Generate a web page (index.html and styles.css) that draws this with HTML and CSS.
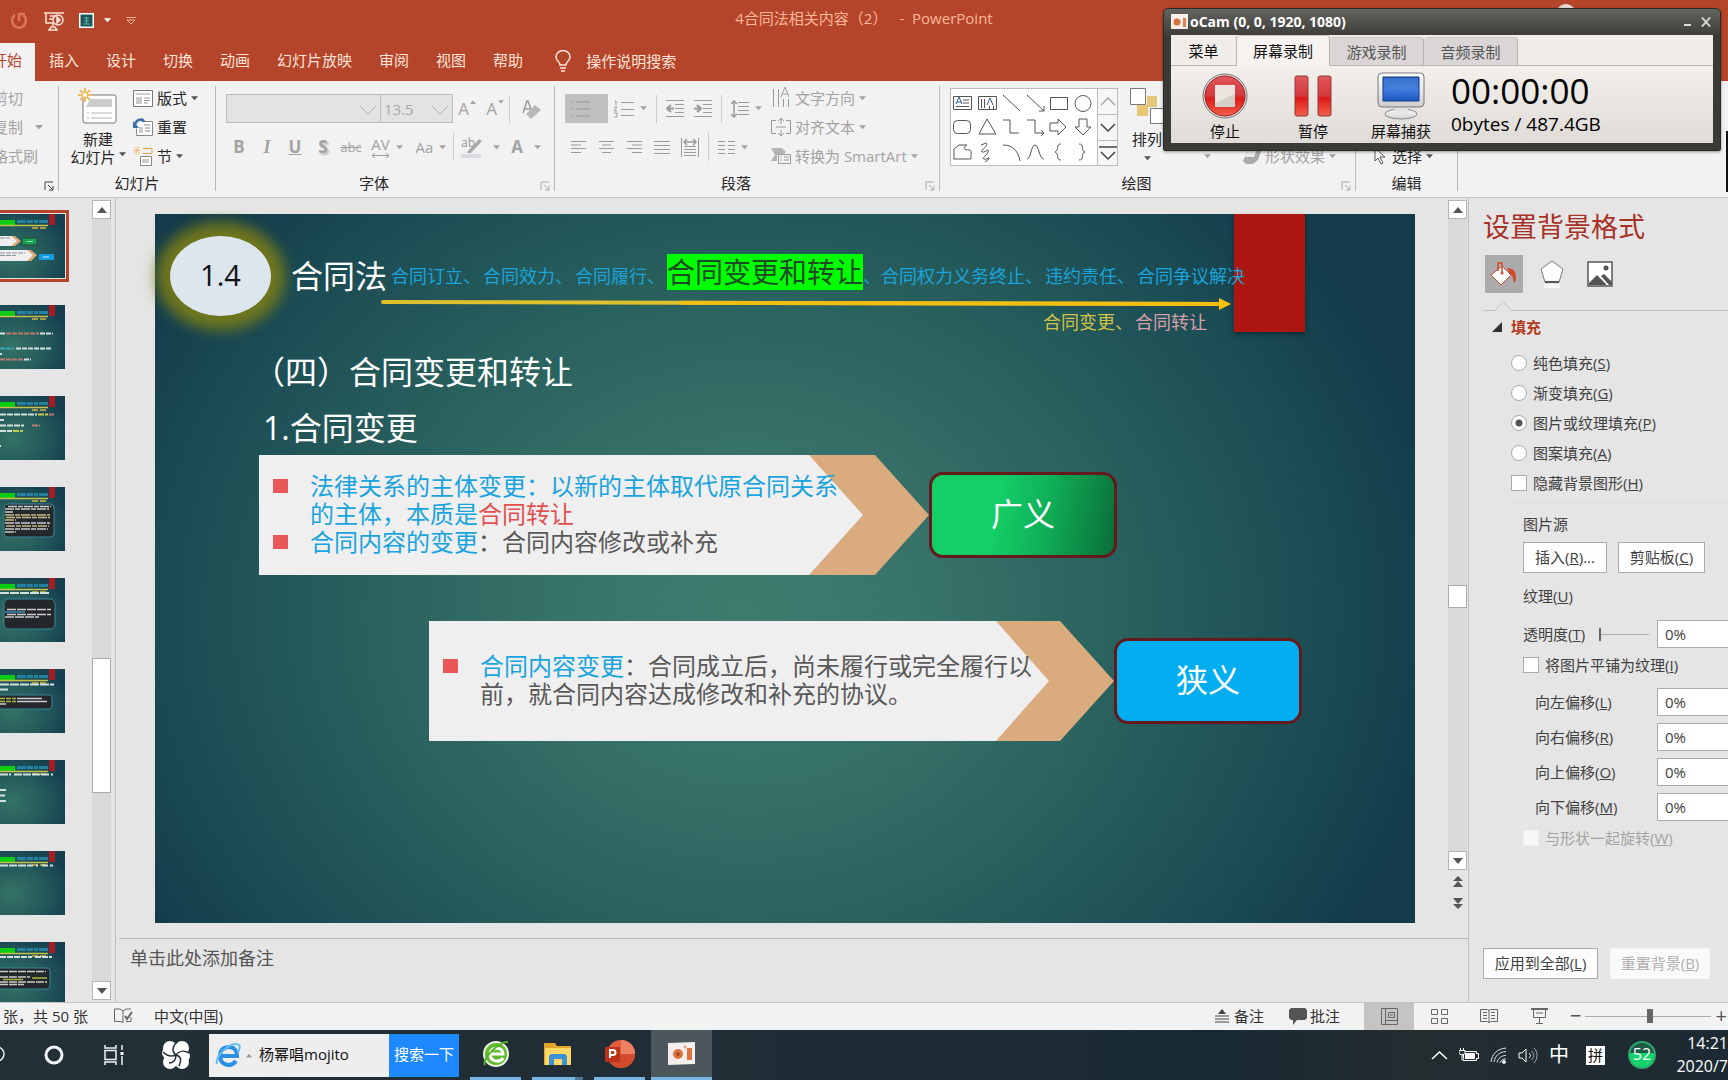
FILE: index.html
```html
<!DOCTYPE html>
<html lang="zh-CN">
<head>
<meta charset="utf-8">
<title>4合同法相关内容（2） - PowerPoint</title>
<link rel="stylesheet" href="styles.css">
</head>
<body>
<svg class="defs" aria-hidden="true">
  <defs>
    <symbol id="down" viewBox="0 0 8 5"><path d="M0 0h8L4 4.500z"/></symbol>
    <symbol id="launch" viewBox="0 0 10 10"><path d="M1 9V1h8M4 4l5 5M9 5v4H5" fill="none" stroke="currentColor"/></symbol>
    <symbol id="thumb-head" viewBox="0 0 65 64">
      <path d="M0 6h15v5H0z" fill="#0ccc14"/>
      <path d="M17 7.500h33" stroke="#23829f" stroke-width="3" stroke-dasharray="9 1 6 1 4 1"/>
      <path d="M0 11.500h48" stroke="#c6bf4a" stroke-width="1.500"/>
      <path d="M32 14h15" stroke="#a49a4a" stroke-width="2" stroke-dasharray="6 2"/>
      <path d="M49 0h6v11h-6z" fill="#a51c22"/>
    </symbol>
    <linearGradient id="g-red" x2="0" y2="1"><stop offset="0" stop-color="#e0585a"/><stop offset=".5" stop-color="#d5383c"/><stop offset=".55" stop-color="#dd1a16"/><stop offset="1" stop-color="#f2604c"/></linearGradient>
    <linearGradient id="g-blue" x2="0" y2="1"><stop offset="0" stop-color="#1a4fae"/><stop offset=".5" stop-color="#3f7fe0"/><stop offset="1" stop-color="#1d55c0"/></linearGradient>
    <linearGradient id="g-silver" x2="0" y2="1"><stop offset="0" stop-color="#fff"/><stop offset="1" stop-color="#cfcfcf"/></linearGradient>
  </defs>
</svg>

<div class="app">
  <header class="titlebar">
    <div class="quick">
      <button aria-label="重做"><svg width="20" height="20" viewBox="0 0 20 20" fill="none" stroke="#d9775c" stroke-width="2.500"><path d="M6 4a7 7 0 1 0 8 0"/><path d="M10 10V3h6"/></svg></button>
      <button aria-label="从头开始"><svg width="20" height="20" viewBox="0 0 20 20" fill="none" stroke="#fbe3d8" stroke-width="1.500"><path d="M0 2h20M2 2v10h7M6 5h7M5 8h4M9 12v3M5 19l2-3h4l2 3z"/><circle cx="14" cy="9" r="5"/><path d="M13 6l3 3-3 3z" fill="#fbe3d8"/></svg></button>
      <button aria-label="主题"><svg width="15" height="15" viewBox="0 0 15 15"><path d="M.75.75h13.500v13.500H.75z" fill="#1d5458" stroke="#fff" stroke-width="1.500"/><path d="M5 5h5M5 8h5M4 11h7M7.500 4v7" stroke="#58b3a6"/></svg></button>
      <button class="tiny" aria-label="更多主题"><svg width="7" height="5" fill="#fff"><use href="#down"/></svg></button>
      <button aria-label="自定义快速访问工具栏"><svg width="10" height="8" viewBox="0 0 10 8" fill="none" stroke="#f3b59e"><path d="M0 .5h10M1 3h8L5 7z"/></svg></button>
    </div>
    <h1>4合同法相关内容（2）<span>-&nbsp; PowerPoint</span></h1>
    <i class="avatar"></i>
  </header>

  <nav class="tabs">
    <a href="#" class="current">开始</a>
    <a href="#">插入</a><a href="#">设计</a><a href="#">切换</a><a href="#">动画</a><a href="#">幻灯片放映</a><a href="#">审阅</a><a href="#">视图</a><a href="#">帮助</a>
    <a href="#" class="tell"><svg width="16" height="22" viewBox="0 0 16 22" fill="none" stroke="#fbe3d8" stroke-width="1.500"><path d="M5 15c0-3-4-4-4-8a7 6.500 0 0 1 14 0c0 4-4 5-4 8zM5 18h6M6 21h4"/></svg>操作说明搜索</a>
  </nav>

  <section class="ribbon">
    <div class="group clipboard">
      <div class="stack">
        <button class="off">剪切</button>
        <button class="off">复制<svg class="far" width="8" height="5"><use href="#down"/></svg></button>
        <button class="off">格式刷</button>
      </div>
      <div class="caption"><svg class="launcher" width="10" height="10"><use href="#launch"/></svg></div>
    </div>

    <div class="group slides">
      <div class="body">
        <button class="big"><svg width="40" height="36" viewBox="0 0 40 36"><rect x="5" y="7" width="33" height="28" rx="2" fill="#fff" stroke="#777"/><path d="M12 11h22v8H8" fill="#ccc"/><path d="M9 25h2M13 25h21M9 30h2M13 30h21" stroke="#b5b5b5"/><path d="M7 0v14M0 7h14M2 2l10 10M12 2L2 12" stroke="#eebb62" stroke-width="2"/><circle cx="7" cy="7" r="2" fill="#fff"/></svg><span>新建</span><span>幻灯片<svg width="7" height="5"><use href="#down"/></svg></span></button>
        <div class="stack">
          <button><svg class="ic" width="20" height="17" viewBox="0 0 20 17" fill="none" stroke="#777"><path d="M.5.5h19v16H.5z" fill="#fff"/><path d="M3 3h14v2H3zM3 7h6v7H3z" fill="#ccc" stroke="none"/><path d="M11 8h6M11 10.500h6M11 13h4" stroke="#999"/></svg>版式<svg width="7" height="5"><use href="#down"/></svg></button>
          <button><svg class="ic" width="20" height="18" viewBox="0 0 20 18" fill="none" stroke="#888"><path d="M8.500 3.500h11v14h-16v-7" fill="#fff"/><path d="M11 7h6M12 10h5M12 13h5"/><path d="M6 9h4v6H6z" fill="#ccc" stroke="none"/><path d="M2 7c1-6 8-7 9-3" stroke="#3a6fa8" stroke-width="2.500"/><path d="M0 3v7h6z" fill="#3a6fa8" stroke="none"/></svg>重置</button>
          <button><svg class="ic" width="20" height="20" viewBox="0 0 20 20" fill="none" stroke="#888"><path d="M10 2.500h9v5h-9" stroke="#e0a050"/><path d="M7.500 10.500h11v9h-11z" fill="#fff"/><path d="M9 13h7v4H9z" fill="#ccc" stroke="none"/><path d="M4 0v9M0 4.500h8M1 1l6 7M7 1L1 8" stroke="#f0c283"/></svg>节<svg width="7" height="5"><use href="#down"/></svg></button>
        </div>
      </div>
      <div class="caption">幻灯片</div>
    </div>

    <div class="group font off">
      <div class="rows">
        <div class="row">
          <div class="combo face"><select aria-label="字体" disabled><option></option></select><svg width="18" height="10" viewBox="0 0 18 10"><path d="M1 1l8 8 8-8" fill="none" stroke="#aaa"/></svg></div>
          <div class="combo size"><select aria-label="字号" disabled><option>13.5</option></select><svg width="18" height="10" viewBox="0 0 18 10"><path d="M1 1l8 8 8-8" fill="none" stroke="#aaa"/></svg></div>
          <button class="w28 glyph" aria-label="增大字号">A<svg class="sup" width="6" height="4" viewBox="0 0 8 5"><path d="M0 5h8L4 0z"/></svg></button>
          <button class="w28 glyph" aria-label="减小字号">A<svg class="sup" width="6" height="4"><use href="#down"/></svg></button>
          <i class="bar"></i>
          <button class="w44" aria-label="清除格式"><svg width="20" height="20" viewBox="0 0 20 20"><path d="M1 14L5 2h1l4 11M2 10h6" fill="none" stroke="#9a9a9a" stroke-width="1.500"/><path d="M4 15l9-9 6 5-10 9z" fill="#b9b9b9"/></svg></button>
        </div>
        <div class="row second">
          <button class="w28 glyph"><b>B</b></button>
          <button class="w28 glyph"><em>I</em></button>
          <button class="w28 glyph"><u><b>U</b></u></button>
          <button class="w28 glyph shade"><b>S</b></button>
          <button class="w28 strike">abc</button>
          <button class="w44 av"><span>AV<svg width="17" height="5" viewBox="0 0 17 5" fill="none" stroke="#9a9a9a"><path d="M0 2.500h17M3 0L0 2.500 3 5M14 0l3 2.500L14 5"/></svg></span><svg width="7" height="5"><use href="#down"/></svg></button>
          <button class="w44">Aa<svg width="7" height="5"><use href="#down"/></svg></button>
          <i class="bar"></i>
          <button class="w52" aria-label="突出显示"><svg width="21" height="22" viewBox="0 0 21 22"><path d="M7 15L18 3l3 2-11 12H6z" fill="#aaa"/><path d="M0 18h20v4H0z" fill="#d9dbe0"/><text x="0" y="11" font-size="12" fill="#999">ab</text></svg><svg class="wide" width="7" height="5"><use href="#down"/></svg></button>
          <button class="w40 glyph"><b>A</b><svg class="wide" width="7" height="5"><use href="#down"/></svg></button>
        </div>
      </div>
      <div class="caption">字体<svg class="launcher" width="10" height="10"><use href="#launch"/></svg></div>
    </div>

    <div class="group para off">
      <div class="body">
        <div class="rows">
          <div class="row">
            <button class="bullets" aria-label="项目符号"><svg width="20" height="18" viewBox="0 0 20 18" stroke="#999" stroke-width="1"><path d="M1 2h2M6 2h14M1 9h2M6 9h14M1 16h2M6 16h14"/></svg></button>
            <button class="w44" aria-label="编号"><svg width="20" height="18" viewBox="0 0 20 18" fill="none" stroke="#9a9a9a"><path d="M7 2.500h13M7 9.500h13M7 15.500h13M1 1h1v4M0 7h3L0 11h3M0 13h3v4H0"/></svg><svg width="7" height="5"><use href="#down"/></svg></button>
            <i class="bar"></i>
            <button class="w28" aria-label="减少缩进"><svg width="18" height="17" viewBox="0 0 18 17" fill="none" stroke="#9a9a9a"><path d="M0 .5h18M9 4.500h9M9 8.500h9M9 12.500h9M0 16.500h18"/><path d="M8 8.500H2M5 5L1 8.500 5 12" stroke-width="2"/></svg></button>
            <button class="w28" aria-label="增加缩进"><svg width="18" height="17" viewBox="0 0 18 17" fill="none" stroke="#9a9a9a"><path d="M0 .5h18M9 4.500h9M9 8.500h9M9 12.500h9M0 16.500h18"/><path d="M0 8.500h6M3 5l4 3.500L3 12" stroke-width="2"/></svg></button>
            <i class="bar"></i>
            <button class="w40" aria-label="行距"><svg width="18" height="18" viewBox="0 0 18 18" fill="none" stroke="#9a9a9a"><path d="M7 2.500h11M7 6.500h11M7 10.500h11M7 14.500h11"/><path d="M3 1v16M0 4l3-3 3 3M0 14l3 3 3-3" stroke-width="1.500"/></svg><svg width="7" height="5"><use href="#down"/></svg></button>
          </div>
          <div class="row second">
            <button class="w28" aria-label="左对齐"><svg width="15" height="12" viewBox="0 0 15 12" stroke="#9a9a9a"><path d="M0 .5h15M0 4h10M0 7.500h15M0 11.500h10"/></svg></button>
            <button class="w28" aria-label="居中"><svg width="15" height="12" viewBox="0 0 15 12" stroke="#9a9a9a"><path d="M0 .5h15M3 4h9M0 7.500h15M3 11.500h9"/></svg></button>
            <button class="w28" aria-label="右对齐"><svg width="15" height="12" viewBox="0 0 15 12" stroke="#9a9a9a"><path d="M0 .5h15M5 4h10M0 7.500h15M5 11.500h10"/></svg></button>
            <button class="w28" aria-label="两端对齐"><svg width="16" height="13" viewBox="0 0 16 13" stroke="#9a9a9a"><path d="M0 .5h16M0 4.500h16M0 8.500h16M0 12.500h16"/></svg></button>
            <button class="w28" aria-label="分散对齐"><svg width="18" height="19" viewBox="0 0 18 19" fill="none" stroke="#9a9a9a"><path d="M.5 0v19M17.500 0v19M3 8.500h12M3 11.500h12M3 14.500h12M3 17.500h12"/><path d="M3 4h12M6 1L3 4l3 3M12 1l3 3-3 3" stroke-width="1.500"/></svg></button>
            <i class="bar"></i>
            <button class="w40" aria-label="分栏"><svg width="17" height="13" viewBox="0 0 17 13" stroke="#9a9a9a"><path d="M0 .5h7M0 4.500h7M0 8.500h7M0 12.500h7M10 .5h7M10 4.500h7M10 8.500h7M10 12.500h7"/></svg><svg width="7" height="5"><use href="#down"/></svg></button>
          </div>
        </div>
        <div class="stack">
          <button><svg class="ic" width="20" height="22" viewBox="0 0 20 22" fill="none" stroke="#9a9a9a"><path d="M2.500 2v18M7.500 2v18M12.500 12v8M17.500 12v8M10 10l4-10 4 10M11 7h6"/></svg>文字方向<svg width="7" height="5"><use href="#down"/></svg></button>
          <button><svg class="ic" width="20" height="20" viewBox="0 0 20 20" fill="none" stroke="#9a9a9a"><path d="M5 3.500H.5v13H5M15 3.500h4.500v13H15M5 10h10M10 1v6M7 4l3-3 3 3M10 19v-6M7 16l3 3 3-3"/></svg>对齐文本<svg width="7" height="5"><use href="#down"/></svg></button>
          <button><svg class="ic" width="20" height="18" viewBox="0 0 20 18" fill="none" stroke="#9a9a9a"><path d="M0 1h11l4 4-3 3H6v6H0l4-6z" fill="#b3b3b3" stroke="none"/><path d="M7.500 7.500h12v9h-12z" fill="#f4f4f4"/><path d="M9 10h2M13 10h5M9 13h2M13 13h5"/></svg>转换为 SmartArt<svg width="7" height="5"><use href="#down"/></svg></button>
        </div>
      </div>
      <div class="caption">段落<svg class="launcher" width="10" height="10"><use href="#launch"/></svg></div>
    </div>

    <div class="group draw">
      <div class="body">
        <div class="gallery">
          <svg width="146" height="76" viewBox="0 0 146 76" fill="none" stroke="#555">
            <path d="M2.500 7.500h18v13h-18z"/><path d="M12 11h6M12 14h6M5 17.500h13"/><path d="M5 15l3-7 3 7M6 13h4" stroke="#2f5f92"/>
            <path d="M27.500 7.500h18v13h-18z"/><path d="M30.500 10v9M33.500 10v9M38.500 17v3M42.500 17v3"/><path d="M36 16l3-7 3 7" stroke="#2f5f92"/>
            <path d="M52 6l17 16M76 6l17 16M93 17v5h-5M99.500 8.500h17v12h-17z"/><circle cx="132" cy="14.500" r="8"/>
            <rect x="2.500" y="31.500" width="17" height="13" rx="4"/><path d="M28 45l8-15 9 15zM52 31h7v13h9M76 31h8v13h9M90 41l3 3-3 3M99 34h8v-4l8 8-8 8v-4h-8zM128 30h8v8h4l-8 8-8-8h4z"/>
            <path d="M3 70V60l5-4h8c-5 3-3 5 2 5 3 0 2 2 2 9zM30 56l5-2c4 2-7 8-4 9s8-5 6 0-7 6-4 7 6-3 5 0l-4 3M52 56c9 0 15 5 17 16M76 70c4 0 4-14 8-14s4 14 9 14M110 55c-6 0-1 6-6 8 5 2 0 8 6 8M128 55c6 0 1 6 6 8-5 2 0 8-6 8"/>
          </svg>
          <div class="gallery-nav">
            <button aria-label="上一行"><svg width="16" height="9" viewBox="0 0 16 9" fill="none" stroke="#aaa" stroke-width="1.500"><path d="M1 8l7-7 7 7"/></svg></button>
            <button aria-label="下一行"><svg width="16" height="9" viewBox="0 0 16 9" fill="none" stroke="#444" stroke-width="1.500"><path d="M1 1l7 7 7-7"/></svg></button>
            <button aria-label="其他"><svg width="18" height="15" viewBox="0 0 18 15" fill="none" stroke="#444" stroke-width="1.500"><path d="M0 1h18M2 6l7 7 7-7"/></svg></button>
          </div>
        </div>
        <button class="big arrange"><svg width="34" height="36" viewBox="0 0 34 36"><path d="M17 8h10v11H17zM7 17h11v11H7z" fill="#e6c777"/><path d="M.5.5h15v16H.5zM20.500 20.500h14v15h-14z" fill="#fff" stroke="#777"/></svg><span>排列</span><svg width="7" height="5"><use href="#down"/></svg></button>
        <div class="stack effects off">
          <button class="low" aria-label="快速样式"><svg width="7" height="5"><use href="#down"/></svg></button>
          <button class="low"><svg class="ic" width="18" height="16" viewBox="0 0 18 16"><path d="M6 0h8l4 3-3 9-5 4H3l-3-3z" fill="#aaa"/><path d="M6 1h8l-3 8H2z" fill="#ececec"/></svg>形状效果<svg width="7" height="5"><use href="#down"/></svg></button>
        </div>
      </div>
      <div class="caption">绘图<svg class="launcher off" width="10" height="10"><use href="#launch"/></svg></div>
    </div>

    <div class="group edit">
      <div class="stack">
        <button class="low"><svg class="ic" width="12" height="18" viewBox="0 0 12 18" fill="#fff" stroke="#555"><path d="M1 1v13l3-3 3 6 2-1-3-6h5z"/></svg>选择<svg width="7" height="5"><use href="#down"/></svg></button>
      </div>
      <div class="caption">编辑</div>
    </div>
    <i class="ribbon-end"></i>
  </section>

  <main>
    <aside class="thumbs">
      <div class="list">
        <button class="thumb on" aria-label="幻灯片"><svg viewBox="0 0 65 64"><use href="#thumb-head"/><path d="M0 22h12l6 5-6 5H0zM0 36h28l6 5-6 6H0z" fill="#eee"/><path d="M11 22h4l6 5-6 5h-4l6-5zM27 36h4l6 5-6 6h-4l6-6z" fill="#dba877"/><path d="M22 24h15v7H22z" fill="#18a04e" stroke="#244"/><path d="M39 40h15v6H39z" fill="#139be0"/><path d="M27 27.500h6" stroke="#9fe0b5"/><path d="M43 43h6" stroke="#c8edff"/><path d="M0 24h10M0 39h25M0 41.500h16" stroke="#8a8f95" stroke-dasharray="5 1"/></svg></button>
        <button class="thumb" aria-label="幻灯片"><svg viewBox="0 0 65 64"><use href="#thumb-head"/><g stroke-width="2" stroke-dasharray="5 1"><path d="M0 28.500h5M40 28.500h13M16 43.500h36M0 49h2M24 54.500h7" stroke="#d3dfdd"/><path d="M6 28.500h33M0 54.500h24" stroke="#b97a70"/><path d="M0 43.500h14" stroke="#3aa6b8"/></g></svg></button>
        <button class="thumb" aria-label="幻灯片"><svg viewBox="0 0 65 64"><use href="#thumb-head"/><g stroke-width="2" stroke-dasharray="6 1"><path d="M0 18.500h37M0 24h4M0 29.500h24M0 35h12M0 50h1" stroke="#d3dfdd"/><path d="M38 18.500h10M13 35h10" stroke="#c2cd50"/><path d="M49 18.500h5M32 29.500h8" stroke="#b97a70"/></g></svg></button>
        <button class="thumb" aria-label="幻灯片"><svg viewBox="0 0 65 64"><use href="#thumb-head"/><rect x="4" y="17" width="50" height="33" rx="4" fill="#24282b" stroke="#36849b"/><g stroke-width="1.500" stroke-dasharray="9 1 5 1"><path d="M8 19.500h43M5 22h44M5 25h8M5 36h45M5 42h43M5 45h11" stroke="#ccc"/><path d="M5 28h45M6 30.500h44M5 33h11M6 39h43" stroke="#c5bb85"/></g></svg></button>
        <button class="thumb" aria-label="幻灯片"><svg viewBox="0 0 65 64"><use href="#thumb-head"/><path d="M0 15h50" stroke="#d3dfdd" stroke-width="2" stroke-dasharray="9 1"/><rect x="4" y="21" width="51" height="30" rx="5" fill="#24282b" stroke="#36849b"/><path d="M7 31.500h44M7 36.500h44M5 39h34" stroke="#ccc" stroke-width="1.500" stroke-dasharray="9 1"/><path d="M5 34h20" stroke="#3a8fc0" stroke-width="1.500"/></svg></button>
        <button class="thumb" aria-label="幻灯片"><svg viewBox="0 0 65 64"><use href="#thumb-head"/><path d="M0 15.500h54M0 20.500h8" stroke="#d3dfdd" stroke-width="2" stroke-dasharray="9 1"/><rect x="-6" y="26" width="58" height="14" rx="3" fill="#24282b" stroke="#36849b"/><path d="M17 29.500h25M17 32.500h30M0 35h6" stroke="#ccc" stroke-width="1.500"/><path d="M0 29.500h16M0 32.500h16" stroke="#a9b443" stroke-width="1.500" stroke-dasharray="5 1"/></svg></button>
        <button class="thumb" aria-label="幻灯片"><svg viewBox="0 0 65 64"><use href="#thumb-head"/><path d="M0 14.500h11M14 14.500h35M51 14.500h2M0 30h6M0 35.500h5M0 41h6" stroke="#d3dfdd" stroke-width="2" stroke-dasharray="8 1"/></svg></button>
        <button class="thumb" aria-label="幻灯片"><svg viewBox="0 0 65 64"><use href="#thumb-head"/><path d="M0 14.500h33M36 14.500h2M42 14.500h6M50 14.500h3" stroke="#d3dfdd" stroke-width="2" stroke-dasharray="8 1"/></svg></button>
        <button class="thumb" aria-label="幻灯片"><svg viewBox="0 0 65 64"><use href="#thumb-head"/><path d="M0 15h32M35 15h17" stroke="#d3dfdd" stroke-width="2" stroke-dasharray="6 1"/><rect x="-6" y="26" width="56" height="21" rx="3" fill="#24282b" stroke="#36849b"/><path d="M0 29.500h46M0 35h30M0 40h47M0 42.500h24" stroke="#ccc" stroke-width="1.500" stroke-dasharray="8 1"/><path d="M32 36h15M3 37.500h20" stroke="#a9b443" stroke-width="1.500"/></svg></button>
      </div>
      <div class="scroll">
        <button aria-label="向上"><svg width="10" height="6" viewBox="0 0 10 6" fill="#555"><path d="M0 6h10L5 0z"/></svg></button>
        <div class="track"><i class="before"></i><i class="grip"></i><i class="after"></i></div>
        <button aria-label="向下"><svg width="10" height="6" viewBox="0 0 10 6" fill="#555"><path d="M0 0h10L5 6z"/></svg></button>
      </div>
    </aside>

    <section class="editor">
      <div class="workspace">
        <article class="slide">
          <div class="flag"></div>
          <header>
            <div class="number">1.4</div>
            <div class="heading">
              <div class="line">
                <h2>合同法</h2>
                <div class="topics"><span>合同订立、</span><span>合同效力、</span><span>合同履行、</span><mark>合同变更和转让</mark><span>、合同权力义务终止、</span><span>违约责任、</span><span>合同争议解决</span></div>
              </div>
              <svg class="arrow" width="850" height="14" viewBox="0 0 850 14"><path d="M2 4l838 2v4L2 8z" fill="#e0c02c"/><path d="M300 4.700L840 6v4l-540-1.300z" fill="#f3bd12"/><circle cx="2" cy="6" r="2" fill="#e0c02c"/><path d="M838 2l12 6-12 6z" fill="#fdbf0d"/></svg>
              <div class="topics sub"><span class="gold">合同变更、</span><span class="pink">合同转让</span></div>
            </div>
          </header>
          <h3>（四）合同变更和转让</h3>
          <h3 class="item">1.合同变更</h3>
          <div class="case broad">
            <div class="plate">
              <svg viewBox="0 0 670 120" preserveAspectRatio="none"><path d="M0 0h551l54 60-54 60H0z" fill="#efefef"/><path d="M550 0h66l54 60-54 60h-66l54-60z" fill="#dbab80"/></svg>
              <ul><li><span class="blue">法律关系的主体变更：以新的主体取代原合同关系<br>的主体，本质是</span><span class="red">合同转让</span></li><li><span class="blue">合同内容的变更</span>：合同内容修改或补充</li></ul>
            </div>
            <div class="tag green">广义</div>
          </div>
          <div class="case narrow">
            <div class="plate">
              <svg viewBox="0 0 685 120" preserveAspectRatio="none"><path d="M0 0h568l53 60-53 60H0z" fill="#efefef"/><path d="M567 0h64l54 60-54 60h-64l53-60z" fill="#dbab80"/></svg>
              <ul><li><span class="blue">合同内容变更</span>：合同成立后，尚未履行或完全履行以<br>前，就合同内容达成修改和补充的协议。</li></ul>
            </div>
            <div class="tag sky">狭义</div>
          </div>
        </article>
        <div class="scroll">
          <button aria-label="向上"><svg width="10" height="6" viewBox="0 0 10 6" fill="#555"><path d="M0 6h10L5 0z"/></svg></button>
          <div class="track"><i class="before"></i><i class="grip"></i><i class="after"></i></div>
          <button aria-label="向下"><svg width="10" height="6" viewBox="0 0 10 6" fill="#555"><path d="M0 0h10L5 6z"/></svg></button>
          <button class="plain" aria-label="上一张"><svg width="10" height="11" viewBox="0 0 10 11" fill="#555"><path d="M0 5h10L5 0zM0 11h10L5 5z"/></svg></button>
          <button class="plain" aria-label="下一张"><svg width="10" height="11" viewBox="0 0 10 11" fill="#555"><path d="M0 0h10L5 6zM0 6h10l-5 5z"/></svg></button>
        </div>
      </div>
      <div class="notes">单击此处添加备注</div>
    </section>

    <aside class="pane">
      <h2>设置背景格式</h2>
      <div class="modes">
        <button class="on" aria-label="填充"><svg width="28" height="28" viewBox="0 0 28 28"><path d="M17 8c7 0 11 5 8 15-3-3-1-7-5-9z" fill="#cf4a2b"/><path d="M12 6l9 9-10 10-10-10z" fill="#fff" stroke="#cf4a2b"/><path d="M8 11V3h4v9" fill="none" stroke="#cf4a2b" stroke-width="1.500"/><circle cx="12" cy="13" r="1.500" fill="#cf4a2b"/></svg></button>
        <button aria-label="效果"><svg width="24" height="28" viewBox="0 0 24 28"><path d="M12 1l11 8-4 13H5L1 9z" fill="#fff" stroke="#777"/><path d="M5 22h14" stroke="#555" stroke-width="2"/><path d="M5 24h14l2 4H3z" fill="#f8f8f8"/></svg></button>
        <button aria-label="图片"><svg width="26" height="26" viewBox="0 0 26 26"><path d="M1 1h24v24H1z" fill="#fff" stroke="#555" stroke-width="1.500"/><path d="M2 22l8-8 9 9v1H2zM14 15l3-2 8 8v3h-3z" fill="#555"/><circle cx="19" cy="7" r="2.500" fill="#555"/></svg></button>
      </div>
      <svg class="rule" height="12" width="245" viewBox="0 0 245 12"><path d="M0 10.500h12l8-9 8 9h217" fill="none" stroke="#c3c3c3"/></svg>
      <h3><svg width="10" height="10"><path d="M10 0v10H0z" fill="#333"/></svg>填充</h3>
      <div class="options">
        <label><input type="radio" name="fill">纯色填充(<u>S</u>)</label>
        <label><input type="radio" name="fill">渐变填充(<u>G</u>)</label>
        <label><input type="radio" name="fill" checked>图片或纹理填充(<u>P</u>)</label>
        <label><input type="radio" name="fill">图案填充(<u>A</u>)</label>
        <label><input type="checkbox">隐藏背景图形(<u>H</u>)</label>
      </div>
      <div class="detail">
        <p>图片源</p>
        <div class="pair"><button>插入(<u>R</u>)...</button><button>剪贴板(<u>C</u>)</button></div>
        <p class="texture">纹理(<u>U</u>)</p>
        <div class="field"><label for="alpha">透明度(<u>T</u>)</label><input type="range" id="alpha" min="0" max="100" value="0"><input type="text" aria-label="透明度" value="0%"></div>
        <label class="tile"><input type="checkbox">将图片平铺为纹理(<u>I</u>)</label>
        <div class="field offset"><label for="ol">向左偏移(<u>L</u>)</label><input type="text" id="ol" value="0%"></div>
        <div class="field offset"><label for="or">向右偏移(<u>R</u>)</label><input type="text" id="or" value="0%"></div>
        <div class="field offset"><label for="ot">向上偏移(<u>O</u>)</label><input type="text" id="ot" value="0%"></div>
        <div class="field offset"><label for="ob">向下偏移(<u>M</u>)</label><input type="text" id="ob" value="0%"></div>
        <label class="rotate"><input type="checkbox" disabled>与形状一起旋转(<u>W</u>)</label>
      </div>
      <div class="actions"><button>应用到全部(<u>L</u>)</button><button disabled>重置背景(<u>B</u>)</button></div>
    </aside>
  </main>

  <footer class="status">
    <span class="count">张，共 50 张</span>
    <svg width="19" height="16" viewBox="0 0 19 16" fill="none" stroke="#666"><path d="M9 14.500l-3-1H.5V1H6l3 2v12M9 3l3-2h5M12 13.500h5V9"/><path d="M11 8l2 3 5-7" stroke-width="2"/></svg>
    <span class="lang">中文(中国)</span>
    <div class="views">
      <button class="text"><svg width="14" height="14" viewBox="0 0 14 14"><path d="M7 0l4 5H3z" fill="#444"/><path d="M0 7h14M0 10h14M0 13h14" stroke="#444"/></svg>备注</button>
      <button class="text comment"><svg width="18" height="17" viewBox="0 0 18 17"><path d="M2 0h14l2 2v8l-2 2H8l-4 5v-5H2l-2-2V2z" fill="#555"/></svg>批注</button>
      <button class="on" aria-label="普通"><svg width="17" height="17" viewBox="0 0 17 17" fill="none" stroke="#666"><path d="M.5.500h16v16H.5zM4.500 0v17M7.500 4.500h6v5h-6zM4.500 12.500h12M9 7h3"/></svg></button>
      <button aria-label="幻灯片浏览"><svg width="17" height="15" viewBox="0 0 17 15" fill="none" stroke="#666"><path d="M.5.500h6v5h-6zM10.500.500h6v5h-6zM.5 9.500h6v5h-6zM10.500 9.500h6v5h-6z"/></svg></button>
      <button aria-label="阅读视图"><svg width="18" height="16" viewBox="0 0 18 16" fill="none" stroke="#666"><path d="M.5 1.500h7l1.500 1 1.500-1h7v12h-7L9 15l-1.500-1.500h-7zM9 2v13M3 4.500h4M3 7.500h4M3 10.500h4M11 4.500h4M11 7.500h4M11 10.500h4"/></svg></button>
      <button aria-label="幻灯片放映"><svg width="17" height="16" viewBox="0 0 17 16" fill="none" stroke="#666"><path d="M0 1h17" stroke-width="2"/><path d="M2.500 2v7.500h12V2M5 5h7M8.500 10v5M5 15.500h7"/></svg></button>
      <div class="zoom"><span>−</span><input type="range" aria-label="缩放" min="0" max="100" value="51"><span>+</span></div>
    </div>
  </footer>

  <footer class="taskbar">
    <button class="edge" aria-label="搜索"><svg width="5" height="16" viewBox="0 0 5 16" fill="none" stroke="#e8eef2" stroke-width="1.500"><circle cx="-3" cy="7" r="7"/></svg></button>
    <button class="cortana" aria-label="Cortana"><svg width="20" height="20"><circle cx="10" cy="10" r="8" fill="none" stroke="#f2f6f8" stroke-width="3"/></svg></button>
    <button class="view" aria-label="任务视图"><svg width="20" height="20" viewBox="0 0 20 20" fill="none" stroke="#eef3f5" stroke-width="1.500"><path d="M1 0v3h11V0M1 5.500h11v9H1zM1 20v-3h11v3M18 0v5M18 11v9"/><path d="M16.500 7h3v3h-3z" fill="#fff" stroke="none"/></svg></button>
    <button class="flower" aria-label="应用"><svg width="28" height="28" viewBox="0 0 28 28"><g fill="#fff"><circle cx="8" cy="7" r="7"/><circle cx="20" cy="7" r="7"/><circle cx="22" cy="15" r="6"/><circle cx="20" cy="21" r="7"/><circle cx="8" cy="21" r="7"/><circle cx="6" cy="12" r="6"/><circle cx="14" cy="14" r="6"/></g><path d="M14 14c-4-3-4-8 0-12M14 14c3-4 8-5 13-2M14 14c5 1 6 6 3 11M14 14c0 5-3 8-7 8M14 14c-5 2-9 1-13-3" fill="none" stroke="#22303a" stroke-width="1.500"/></svg></button>
    <div class="search">
      <svg width="26" height="26" viewBox="0 0 26 26" fill="none"><path d="M21 19c-5 7-16 4-16-5 0-8 6-9 9-9 5 0 8 4 8 9H6" stroke="#2b8fe8" stroke-width="4"/><path d="M2 22C-1 15 16-2 24 3c2 2 0 5-1 7" stroke="#63bdf5" stroke-width="2"/></svg>
      <svg width="6" height="5" viewBox="0 0 8 5" fill="#999"><path d="M0 5h8L4 0z"/></svg>
      <input type="text" aria-label="搜索" value="杨幂唱mojito">
      <button>搜索一下</button>
    </div>
    <button class="app-icon" aria-label="浏览器"><svg width="28" height="28" viewBox="0 0 28 28" fill="none"><circle cx="14" cy="14" r="12" fill="#62bb2e" stroke="#e9f6e0" stroke-width="2"/><path d="M21 18c-3 5-13 4-13-4 0-7 12-8 13-1v1H8" stroke="#fff" stroke-width="3"/><path d="M3 25C0 18 18 1 26 2" stroke="#55b12c" stroke-width="2"/></svg></button>
    <button class="app-icon double" aria-label="文件资源管理器"><svg width="28" height="24" viewBox="0 0 28 24"><path d="M0 1h11l2 3h14v19H0z" fill="#e2a52a"/><path d="M1 6h26v17H1z" fill="#ffd766"/><path d="M5 23v-9l2-2h14l2 2v9h-5v-6h-8v6z" fill="#3a92d6"/></svg></button>
    <button class="app-icon" aria-label="PowerPoint"><svg width="30" height="28" viewBox="0 0 30 28"><circle cx="16" cy="14" r="14" fill="#e0603f"/><path d="M16 0a14 14 0 0 1 14 14H16z" fill="#ee8163"/><path d="M2 14h28a14 14 0 0 1-27 5z" fill="#d14a2c"/><rect y="7" width="15" height="15" rx="1" fill="#bb3318"/><path d="M5 18v-8h3a2.500 2.500 0 0 1 0 5H5" fill="none" stroke="#fff" stroke-width="2"/></svg></button>
    <button class="app-icon active" aria-label="oCam"><svg width="27" height="23" viewBox="0 0 27 23"><path d="M0 1l27-1v22l-27 1z" fill="#f4efec"/><circle cx="10" cy="12" r="5" fill="#df7440"/><circle cx="10" cy="12" r="2" fill="#a84c22"/><path d="M19 6h5v12h-5z" fill="#df7440"/><circle cx="17" cy="5" r="1.500" fill="#e6a080"/></svg></button>
    <div class="tray">
      <svg width="17" height="9" viewBox="0 0 17 9" fill="none" stroke="#fff" stroke-width="1.500"><path d="M1 8l7.500-7L16 8"/></svg>
      <svg width="20" height="15" viewBox="0 0 20 15"><path d="M4.500 3.500h13v2h2v5h-2v2h-13z" fill="none" stroke="#fff"/><path d="M6 5h10v6H6z" fill="#fff"/><path d="M1.500 0v2M4.500 0v2M0 2.500h6v3L3 7 0 5.500zM3 7v5h2" fill="#22303a" stroke="#fff"/></svg>
      <svg width="17" height="17" viewBox="0 0 17 17" fill="none" stroke="#dfe5e8"><path d="M1 15C2 7 7 2 16 1M4 15c1-6 5-10 12-10.500M7 15.500c1-4 4-7 9-7M10 16c1-3 3-4 6-4"/><circle cx="14" cy="15" r="1.500" fill="#fff"/></svg>
      <svg width="20" height="17" viewBox="0 0 20 17" fill="none" stroke="#fff"><path d="M1 6h3l4-4v13l-4-4H1zM11 6c2 2 2 3 0 5"/><path d="M13.500 4c3 3 3 6 0 9M16 1c4 4 4 11 0 15" stroke="#a5aeb3"/></svg>
      <span class="ime">中</span>
      <span class="pin">拼</span>
      <span class="score">52</span>
    </div>
    <div class="clock"><span>14:21</span><span>2020/7</span></div>
  </footer>

  <section class="ocam">
    <div class="ocam-title">
      <svg width="17" height="15" viewBox="0 0 17 15"><path d="M0 0h17v15H0z" fill="#f8efe9"/><circle cx="6" cy="8" r="3.500" fill="#d8713f"/><path d="M12 4h3v9h-3z" fill="#dd8452"/></svg>
      <b>oCam (0, 0, 1920, 1080)</b>
      <button aria-label="最小化"><svg width="7" height="9"><path d="M0 7h7v2H0z" fill="#ddd"/></svg></button>
      <button aria-label="关闭"><svg width="10" height="10" viewBox="0 0 11 10" stroke="#ddd" stroke-width="2"><path d="M1 0l9 10M10 0L1 10"/></svg></button>
    </div>
    <div class="ocam-tabs"><button class="menu">菜单</button><button class="on">屏幕录制</button><button>游戏录制</button><button>音频录制</button></div>
    <div class="ocam-body">
      <button class="act"><svg width="48" height="48" viewBox="0 0 48 48"><circle cx="24" cy="24" r="22" fill="#ddd" stroke="#777"/><circle cx="24" cy="24" r="20" fill="url(#g-red)" stroke="#9c2020"/><path d="M14 13h20v22H14z" fill="#eee4e0"/><path d="M14 31l20-9v13H14z" fill="#d5cfca"/></svg>停止</button>
      <button class="act"><svg width="48" height="48" viewBox="0 0 48 48" fill="url(#g-red)" stroke="#8d3a3a"><rect x="6" y="4" width="13" height="40" rx="2"/><rect x="29" y="4" width="13" height="40" rx="2"/></svg>暂停</button>
      <button class="act"><svg width="48" height="48" viewBox="0 0 48 48"><ellipse cx="24" cy="42" rx="16" ry="5" fill="url(#g-silver)" stroke="#888"/><path d="M18 35h12l2 7H16z" fill="#e6e6e6"/><rect x="1" y="1" width="46" height="34" rx="4" fill="url(#g-silver)" stroke="#777"/><path d="M6 5h36v24H6z" fill="url(#g-blue)" stroke="#123c86"/><path d="M7 6h34v8q-17 8-34 0z" fill="#4b86dd" opacity=".6"/></svg>屏幕捕获</button>
      <div class="meter"><span class="time">00:00:00</span><span class="bytes">0bytes / 487.4GB</span></div>
    </div>
  </section>
</div>
</body>
</html>
```

FILE: styles.css
```css
* { box-sizing: border-box; }
body { margin: 0; background: #e5e5e5; color: #333; font: 15px/20px "Open Sans", "Noto Sans CJK SC", sans-serif; overflow: hidden; }
button { display: flex; align-items: center; justify-content: center; margin: 0; padding: 0; border: 0; background: none; color: inherit; font: inherit; white-space: nowrap; }
input, select { margin: 0; font: inherit; color: inherit; }
h1, h2, h3, p, ul { margin: 0; padding: 0; font-weight: 400; }
svg { flex: none; display: block; }
i { display: block; }
a { color: inherit; text-decoration: none; }
.defs { position: absolute; width: 0; height: 0; }
.app { position: relative; display: flex; flex-direction: column; height: 100vh; overflow: hidden; }

/* title bar and tabs */
.titlebar { position: relative; flex: none; height: 43px; padding-top: 8px; background: #b5452a; }
.titlebar h1 { font-size: 15px; line-height: 20px; text-align: center; color: #fcb79a; }
.titlebar h1 span { margin-left: 12px; }
.quick { position: absolute; left: 9px; top: 10px; display: flex; align-items: center; gap: 15px; height: 21px; }
.quick .tiny { margin: 0 0 0 -5px; }
.avatar { position: absolute; right: 152px; top: 4px; width: 20px; height: 20px; border-radius: 50%; background: #e9d9d2; }
.tabs { flex: none; display: flex; height: 38px; background: #b5452a; color: #fbe3d8; line-height: 34px; white-space: nowrap; }
.tabs a { padding: 0 13px 0 14px; }
.tabs .current { display: flex; justify-content: flex-end; width: 35px; padding-left: 0; background: #f2f2f2; color: #b5452a; }
.tabs .tell { display: flex; align-items: center; gap: 15px; height: 36px; padding-left: 19px; }

/* ribbon */
.ribbon { position: relative; flex: none; display: flex; height: 117px; background: #f2f2f2; border-bottom: 1px solid #c8c8c8; color: #262626; fill: #555; overflow: hidden; }
.ribbon button { gap: 6px; }
.ribbon-end { position: absolute; right: 0; top: 50px; width: 2px; height: 61px; background: #111; }
.group { flex: none; display: flex; flex-direction: column; margin: 5px 0 6px; border-right: 1px solid #b8b8b8; }
.off, .off button { color: #a3a3a3; fill: #a3a3a3; }
.body { display: flex; }
.group > .body, .group > .stack, .group > .rows { height: 88px; }
.caption { position: relative; line-height: 20px; height: 18px; text-align: center; color: #262626; }
.font .caption, .para .caption, .draw .caption { padding-right: 22px; }
.launcher { position: absolute; right: 4px; top: 8px; color: #444; fill: none; }
.off .launcher, .launcher.off { color: #aaa; }
.stack { display: flex; flex-direction: column; gap: 5px; align-items: flex-start; }
.ribbon .stack button { height: 24px; gap: 4px; }
.clipboard { width: 59px; }
.clipboard .stack { margin-left: -7px; }
.clipboard .far { margin-left: 8px; }
.slides { width: 157px; }
.slides .body { padding-left: 12px; }
.big { flex-direction: column; justify-content: flex-start; width: 54px; margin-right: 8px; padding-top: 2px; line-height: 18px; }
.ribbon .big { gap: 0; }
.big svg:first-child { margin: 0 0 6px; }
.big span { display: flex; align-items: center; gap: 3px; height: 18px; }
.font { width: 339px; }
.rows { padding: 8px 0 0 9px; }
.row { display: flex; align-items: center; height: 29px; }
.second { margin-top: 10px; height: 28px; }
.combo { position: relative; height: 29px; border: 1px solid #bcbcbc; background: #e3e3e3; }
.combo select { width: 100%; height: 27px; padding: 0 3px; border: 0; background: none; appearance: none; color: #a9a9a9; opacity: 1; }
.combo svg { position: absolute; right: 3px; top: 10px; fill: none; }
.face { width: 155px; margin-left: 1px; }
.size { width: 73px; margin-left: -1px; }
.bar { width: 1px; height: 28px; background: #ccc; }
.w28 { width: 28px; }
.w40 { width: 40px; }
.w44 { width: 44px; }
.w52 { width: 52px; }
.glyph { font-size: 17px; }
.ribbon .row .glyph { gap: 1px; }
.wide { margin-left: 5px; }
.glyph .wide { margin-left: 10px; }
.glyph .sup { margin-bottom: 14px; }
.glyph em { font-family: "Liberation Serif", serif; font-weight: 700; font-size: 18px; }
.shade { text-shadow: 2px 2px 2px #bbb; }
.strike { font-size: 13px; text-decoration: line-through; }
.av span { display: flex; flex-direction: column; align-items: center; line-height: 17px; }
.para { width: 385px; }
.para .rows { width: 215px; }
.para .stack { margin-left: 1px; }
.bullets { width: 43px; height: 29px; margin-left: 1px; padding-right: 14px; background: #c0c0c0; }
.para .row .bar { margin: 0 4px; }
.draw { width: 416px; }
.gallery { display: flex; width: 168px; height: 78px; margin: 2px 0 0 10px; border: 1px solid #bcbcbc; background: #fff; }
.gallery > svg { fill: none; }
.gallery-nav { flex: 1; border-left: 1px solid #bcbcbc; }
.gallery-nav button { width: 100%; height: 26px; background: #f6f6f6; border-bottom: 1px solid #bcbcbc; }
.gallery-nav button:last-child { height: 24px; border: 0; }
.gallery-nav svg { fill: none; }
.ribbon .gallery-nav svg { margin: 0; }
.arrange { margin-left: 2px; margin-right: 4px; }
.arrange > svg:last-child { margin-top: 8px; }
.effects { flex-direction: row; gap: 32px; padding-left: 26px; }
.stack .low { margin-top: 58px; }
.edit { width: 102px; }
.edit .stack { padding-left: 18px; }
.edit .ic { margin-right: 2px; }

/* middle area */
main { flex: 1; display: flex; min-height: 0; }
.thumbs { flex: none; display: flex; width: 116px; border-right: 1px solid #bdbdbd; }
.list { flex: 1; display: flex; flex-direction: column; gap: 27px; padding-top: 16px; overflow: hidden; }
.thumb { flex: none; width: 65px; height: 64px; background: radial-gradient(ellipse 60px 50px at 12px 42px, #357264, #245a5b 55%, #153f4f); }
.thumb svg { width: 65px; height: 64px; }
.thumb.on { outline: 3px solid #b5452a; outline-offset: 1px; }
.scroll { flex: none; display: flex; flex-direction: column; width: 19px; padding: 2px 0; }
.thumbs .scroll { margin-right: 4px; }
.scroll button { flex: none; height: 19px; border: 1px solid #b5b5b5; background: #fff; }
.track { flex: 1; display: flex; flex-direction: column; background: #d9d9d9; }
.grip { background: #fff; border: 1px solid #ababab; }
.thumbs .before { flex: 440; }
.thumbs .grip { flex: 134; }
.thumbs .after { flex: 188; }
.editor { flex: 1; display: flex; flex-direction: column; min-width: 0; }
.workspace { flex: 1; display: flex; min-height: 0; padding-left: 39px; }
.workspace .scroll { margin-left: 33px; padding-bottom: 24px; margin-right: 1px; }
.workspace .before { flex: 367; }
.workspace .grip { flex: 21; }
.workspace .after { flex: 244; }
.scroll .plain { height: 22px; border: 0; background: none; }
.notes { flex: none; height: 64px; margin-left: 3px; padding: 7px 11px; border-top: 1px solid #b9b9b9; font-size: 18px; line-height: 24px; color: #555; }

/* slide */
.slide { position: relative; flex: 1; align-self: flex-start; aspect-ratio: 16 / 9; margin-top: 16px; padding-top: 22px; color: #fff;
  background: radial-gradient(ellipse 56% 85% at 47% 56%, #3f7c6d 0%, #38736a 25%, #28605d 55%, #1c4d55 80%, #133b4a 100%); }
.flag { position: absolute; right: 110px; top: 0; width: 71px; height: 118px; background: #ae1612; box-shadow: 0 2px 4px rgba(0,0,0,.4); }
.slide header { position: relative; display: flex; padding-left: 15px; }
.number { flex: none; width: 101px; height: 80px; border-radius: 50%; background: #dce6ec; color: #111; font-size: 29px; line-height: 78px; text-align: center; box-shadow: 0 0 14px 14px rgba(122,124,24,.9); }
.heading { flex: 1; min-width: 0; padding: 18px 0 0 20px; white-space: nowrap; }
.line { display: flex; gap: 4px; height: 44px; align-items: center; }
.line h2 { font-size: 32px; line-height: 44px; }
.topics { display: flex; align-items: baseline; gap: 2px; font-size: 18px; line-height: 24px; color: #1ca3d8; }
.topics mark { background: #00ff00; color: #1c4a22; font-size: 28px; line-height: 36px; margin-right: -2px; }
.line .topics { height: 44px; }
.arrow { margin: -2px 0 0 90px; }
.sub { margin: 0 0 0 752px; }
.gold { color: #cfc344; }
.pink { color: #d99fa8; }
.slide h3 { margin-top: 14px; padding-left: 98px; font-size: 32px; line-height: 48px; }
.slide .item { margin-top: 8px; padding-left: 108px; }
.case { display: flex; align-items: center; }
.broad { margin: 3px 0 0 104px; }
.narrow { margin: 46px 0 0 274px; }
.plate { position: relative; height: 120px; }
.broad .plate { width: 670px; padding-top: 17px; }
.narrow .plate { width: 685px; padding-top: 31px; }
.plate svg { position: absolute; inset: 0; width: 100%; height: 100%; }
.plate ul { position: relative; list-style: none; padding-left: 51px; font-size: 24px; line-height: 28px; color: #595959; white-space: nowrap; }
.plate li { position: relative; }
.plate li::before { content: ""; position: absolute; left: -37px; top: 7px; width: 15px; height: 14px; background: #ea5757; }
.blue { color: #1aa4dd; }
.red { color: #e2504f; }
.tag { width: 188px; height: 86px; border: 3px solid #641a1c; border-radius: 14px; font-size: 32px; line-height: 78px; text-align: center; }
.green { background: linear-gradient(100deg, #14cf68 35%, #10b259 60%, #0a6e38); }
.sky { background: #02aeef; }

/* format pane */
.pane { flex: none; display: flex; flex-direction: column; width: 260px; padding: 10px 0 23px 14px; border-left: 1px solid #bdbdbd; overflow: hidden; white-space: nowrap; color: #404040; }
.pane h2 { font-size: 27px; line-height: 38px; color: #a83228; }
.modes { display: flex; gap: 10px; height: 38px; margin: 9px 0 0 2px; }
.modes button { width: 38px; height: 38px; }
.modes .on { background: #ababab; }
.rule { margin-top: 7px; width: 100%; }
.pane h3 { display: flex; align-items: center; gap: 9px; margin: 5px 0 0 9px; font-size: 15px; font-weight: 700; line-height: 20px; color: #b23a20; }
.options { display: flex; flex-direction: column; gap: 10px; margin: 16px 0 0 28px; padding-bottom: 9px; border-bottom: 1px solid #dedede; }
.pane label { display: flex; align-items: center; line-height: 20px; }
.pane input[type=radio], .pane input[type=checkbox] { appearance: none; flex: none; width: 16px; height: 16px; margin-right: 6px; border: 1px solid #aaa; background: #fff; }
.pane input[type=radio] { border-radius: 50%; }
.pane input[type=radio]:checked { background: radial-gradient(circle, #555 0 3px, #fff 4px); }
.pane input[type=checkbox]:disabled { border-color: #eee; background: #f7f7f7; }
.detail { margin: 11px 0 0 40px; }
.pair { display: flex; gap: 11px; margin-top: 8px; }
.pair button, .actions button { height: 31px; padding-bottom: 1px; border: 1px solid #ababab; background: #fdfdfd; }
.pair button { width: 84px; }
.pair button:last-child { width: 87px; }
.texture { margin-top: 13px; }
.field { display: flex; align-items: center; height: 28px; }
.field label { flex: none; }
.field input[type=text] { flex: none; width: 100px; height: 28px; margin-left: auto; margin-right: -29px; padding: 0 7px; border: 1px solid #ababab; background: #fff; }
.texture + .field { margin-top: 14px; }
.tile { margin: 7px 0 13px; }
.offset { margin-bottom: 7px; padding-left: 12px; }
.rotate { margin-top: 5px; color: #a3a3a3; }
.actions { display: flex; gap: 12px; margin-top: auto; }
.actions button { width: 115px; }
.actions button:disabled { width: 100px; border-color: #f4f4f4; background: #fafafa; color: #b0b0b0; }
input[type=range] { appearance: none; height: 15px; background: linear-gradient(#aaa, #aaa) center / 100% 1px no-repeat; }
input[type=range]::-webkit-slider-thumb { appearance: none; width: 2px; height: 13px; background: #666; }
.field input[type=range] { width: 50px; margin-left: 14px; }

/* status bar */
.status { flex: none; display: flex; align-items: center; height: 28px; padding: 0 0 1px 3px; background: #f2f2f2; border-top: 1px solid #c6c6c6; color: #333; white-space: nowrap; }
.count { width: 111px; }
.lang { margin-left: 21px; }
.views { display: flex; align-items: center; height: 27px; margin-left: auto; }
.views button { width: 50px; height: 27px; }
.views .text { width: auto; gap: 5px; }
.views .comment { gap: 3px; margin: 0 24px 0 25px; }
.views .on { background: #c4c4c4; }
.zoom { display: flex; align-items: center; gap: 4px; width: 164px; padding-left: 6px; font-size: 20px; color: #555; overflow: hidden; }
.zoom input { flex: none; width: 126px; }
.zoom input::-webkit-slider-thumb { width: 6px; height: 14px; }

/* taskbar */
.taskbar { flex: none; display: flex; align-items: center; height: 50px; background: linear-gradient(90deg, #232f36, #1f2c35 55%, #182934 70%, #242c30 82%, #1c2a33); color: #fff; white-space: nowrap; }
.edge { width: 5px; margin-right: 39px; }
.cortana { width: 20px; margin-right: 40px; }
.view { margin-right: 38px; }
.flower { margin-right: 19px; }
.search { display: flex; align-items: center; gap: 5px; width: 250px; height: 43px; padding-left: 6px; background: #eee; color: #111; }
.search svg + svg { margin-right: 2px; }
.search input { flex: 1; min-width: 0; padding: 0 0 2px; border: 0; background: none; }
.search button { width: 70px; height: 43px; padding-bottom: 2px; background: #1e88ff; color: #fff; }
.app-icon { width: 51px; height: 50px; margin-left: 11px; border-bottom: 3px solid #78b4e4; }
.double { border-image: linear-gradient(90deg, #78b4e4 80%, #4b7694 80%) 3; }
.app-icon.active { width: 61px; margin-left: 6px; background: #4b565d; }
.tray { display: flex; align-items: center; gap: 11px; margin-left: auto; }
.ime { font-size: 20px; line-height: 24px; margin-right: 6px; }
.pin { width: 19px; height: 19px; background: #fff; color: #111; line-height: 18px; text-align: center; }
.score { width: 28px; height: 28px; margin: 0 2px 0 12px; border: 2px solid #2ea56d; border-radius: 50%; background: linear-gradient(#1f5a45 40%, #14d36c 40%); font-size: 16px; line-height: 22px; text-align: center; }
.clock { display: flex; flex-direction: column; align-items: flex-end; width: 70px; font-size: 16px; line-height: 23px; }

/* recorder window */
.ocam { position: absolute; right: 7px; top: 8px; width: 558px; padding: 0 7px 7px; border-radius: 5px 5px 2px 2px; background: linear-gradient(#63635f, #3a3a36 28px); border: 1px solid #2a2a28; color: #111; box-shadow: 0 1px 3px rgba(0,0,0,.4); }
.ocam-title { display: flex; align-items: center; gap: 2px; height: 26px; padding-bottom: 1px; color: #fff; font-size: 14px; line-height: 20px; }
.ocam-title b { margin-right: auto; }
.ocam-title button { margin-right: 8px; }
.ocam-title button:last-child { margin-right: 2px; }
.ocam-tabs { display: flex; height: 31px; background: #f0ede9; }
.ocam-tabs button { width: 94px; border: 1px solid #b7b4b2; border-top-color: #c9c6c4; border-left-width: 0; border-radius: 4px 4px 0 0; background: #d9d6d5; color: #555; margin-top: 2px; }
.ocam-tabs .menu { width: 66px; margin: 0; border-color: transparent #b7b4b2 #b7b4b2 transparent; background: none; color: #111; }
.ocam-tabs .on { width: 93px; margin: 0; border-bottom-color: transparent; background: #f5f2f0; color: #111; }
.ocam-tabs::after { content: ""; flex: 1; border-bottom: 1px solid #b7b4b2; }
.ocam-body { display: flex; height: 77px; padding-left: 14px; background: linear-gradient(#f3f0ec, #dfdbd6); }
.act { flex-direction: column; justify-content: flex-start; width: 80px; margin-right: 8px; padding-top: 6px; line-height: 20px; }
.act svg { margin-bottom: 1px; }
.meter { display: flex; flex-direction: column; padding-left: 2px; }
.time { font-size: 35px; line-height: 44px; margin-top: 3px; color: #000; }
.bytes { font-size: 19px; line-height: 22px; color: #000; }
```
